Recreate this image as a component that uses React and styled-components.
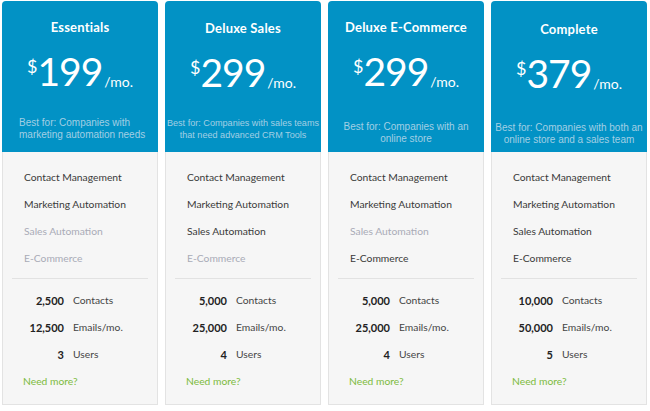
import React from "react";
import styled, { createGlobalStyle } from "styled-components";

const Global = createGlobalStyle`
  html, body { margin: 0; padding: 0; background: #ffffff; }
  body { font-family: "Lato", "Liberation Sans", sans-serif; }
`;

const Page = styled.div`
  display: grid;
  grid-template-columns: repeat(4, 156px);
  column-gap: 7px;
  padding: 1px 0 0 2px;
  width: 650px;
  height: 411px;
  box-sizing: border-box;
`;

const Card = styled.div`
  display: flex;
  flex-direction: column;
  width: 156px;
  height: 404px;
`;

const Header = styled.div`
  background: #0292c5;
  border-radius: 4px 4px 0 0;
  height: 151px;
  box-sizing: border-box;
  padding-top: ${(p) => 17 + p.$shift}px;
  display: flex;
  flex-direction: column;
  align-items: center;
  color: #ffffff;
`;

const Title = styled.div`
  font-family: "Lato", sans-serif;
  font-weight: 700;
  font-size: 13px;
  line-height: 18px;
  letter-spacing: 0.2px;
`;

const Price = styled.div`
  display: flex;
  align-items: flex-start;
  margin-top: 13px;
  height: 46px;
  font-family: "Lato", sans-serif;
  font-weight: 400;
`;

const Dollar = styled.span`
  font-size: 18px;
  line-height: 18px;
  margin-top: 8px;
`;

const Amount = styled.span`
  font-size: 39px;
  line-height: 44px;
  letter-spacing: -1px;
`;

const Per = styled.span`
  font-size: 14px;
  line-height: 14px;
  margin-top: 26px;
  margin-left: 2px;
`;

const Desc = styled.div`
  margin-top: ${(p) => p.$top}px;
  align-self: ${(p) => (p.$align === "left" ? "flex-start" : "center")};
  padding: ${(p) => (p.$align === "left" ? "0 0 0 17px" : "0")};
  text-align: ${(p) => p.$align};
  font-family: "Liberation Sans", Arial, sans-serif;
  font-size: ${(p) => p.$size}px;
  line-height: 11.5px;
  color: #a3cfe4;
  white-space: pre;
`;

const Body = styled.div`
  flex: 1;
  background: #f6f6f6;
  border: 1px solid #e3e3e3;
  border-top: none;
  padding-top: 12px;
  display: flex;
  flex-direction: column;
`;

const Feature = styled.div`
  height: 27px;
  line-height: 27px;
  padding-left: 21px;
  font-size: 10.3px;
  color: ${(p) => (p.$on ? "#3a3a3a" : "#a9abb6")};
`;

const Divider = styled.div`
  height: 1px;
  background: #e2e2e2;
  margin: 6px 9px 8px;
`;

const Stat = styled.div`
  display: flex;
  height: 27px;
  line-height: 27px;
  padding-left: 15px;
`;

const Num = styled.span`
  width: 46px;
  text-align: right;
  font-size: 11px;
  font-weight: 700;
  color: #222222;
`;

const Label = styled.span`
  margin-left: 9px;
  font-size: 10.3px;
  color: #454545;
`;

const More = styled.div`
  height: 27px;
  line-height: 27px;
  padding-left: 20px;
  font-size: 10.3px;
  color: #7dbb3c;
`;

const FEATURES = ["Contact Management", "Marketing Automation", "Sales Automation", "E-Commerce"];

const plans = [
  {
    name: "Essentials", price: "199", shift: 0, descTop: 22, align: "left", size: 10,
    desc: "Best for: Companies with\nmarketing automation needs",
    on: [true, true, false, false], stats: ["2,500", "12,500", "3"],
  },
  {
    name: "Deluxe Sales", price: "299", shift: 1, descTop: 22, align: "center", size: 9.1,
    desc: "Best for: Companies with sales teams\nthat need advanced CRM Tools",
    on: [true, true, true, false], stats: ["5,000", "25,000", "4"],
  },
  {
    name: "Deluxe E-Commerce", price: "299", shift: 0, descTop: 26, align: "center", size: 10,
    desc: "Best for: Companies with an\nonline store",
    on: [true, true, false, true], stats: ["5,000", "25,000", "4"],
  },
  {
    name: "Complete", price: "379", shift: 2, descTop: 25, align: "center", size: 10,
    desc: "Best for: Companies with both an\nonline store and a sales team",
    on: [true, true, true, true], stats: ["10,000", "50,000", "5"],
  },
];

const LABELS = ["Contacts", "Emails/mo.", "Users"];

export default function App() {
  return (
    <>
      <Global />
      <Page>
        {plans.map((p) => (
          <Card key={p.name}>
            <Header $shift={p.shift}>
              <Title>{p.name}</Title>
              <Price>
                <Dollar>$</Dollar>
                <Amount>{p.price}</Amount>
                <Per>/mo.</Per>
              </Price>
              <Desc $top={p.descTop} $align={p.align} $size={p.size}>{p.desc}</Desc>
            </Header>
            <Body>
              {FEATURES.map((f, i) => (
                <Feature key={f} $on={p.on[i]}>{f}</Feature>
              ))}
              <Divider />
              {p.stats.map((s, i) => (
                <Stat key={LABELS[i]}>
                  <Num>{s}</Num>
                  <Label>{LABELS[i]}</Label>
                </Stat>
              ))}
              <More>Need more?</More>
            </Body>
          </Card>
        ))}
      </Page>
    </>
  );
}
